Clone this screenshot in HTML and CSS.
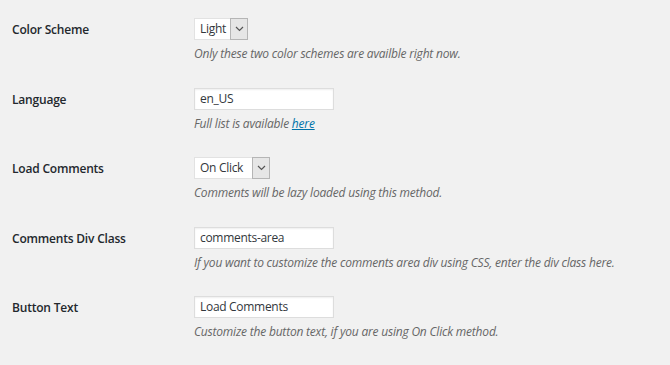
FILE: index.html
```html
<!DOCTYPE html>
<html>
<head>
<meta charset="utf-8">
<link rel="stylesheet" href="styles.css">
</head>
<body>
<div class="form">
  <div class="row">
    <div class="label">Color Scheme</div>
    <div class="field">
      <div class="select"><span class="select-value w-light">Light</span><span class="select-btn"><svg width="9" height="6" viewBox="0 0 9 6"><path d="M1 1 L4.5 4.5 L8 1" fill="none" stroke="#555" stroke-width="1.2"/></svg></span></div>
      <p class="desc">Only these two color schemes are availble right now.</p>
    </div>
  </div>
  <div class="row">
    <div class="label">Language</div>
    <div class="field">
      <div class="input">en_US</div>
      <p class="desc">Full list is available <a href="#">here</a></p>
    </div>
  </div>
  <div class="row">
    <div class="label">Load Comments</div>
    <div class="field">
      <div class="select"><span class="select-value w-click">On Click</span><span class="select-btn"><svg width="9" height="6" viewBox="0 0 9 6"><path d="M1 1 L4.5 4.5 L8 1" fill="none" stroke="#555" stroke-width="1.2"/></svg></span></div>
      <p class="desc">Comments will be lazy loaded using this method.</p>
    </div>
  </div>
  <div class="row">
    <div class="label">Comments Div Class</div>
    <div class="field">
      <div class="input">comments-area</div>
      <p class="desc">If you want to customize the comments area div using CSS, enter the div class here.</p>
    </div>
  </div>
  <div class="row">
    <div class="label">Button Text</div>
    <div class="field">
      <div class="input">Load Comments</div>
      <p class="desc">Customize the button text, if you are using On Click method.</p>
    </div>
  </div>
</div>
</body>
</html>
```

FILE: styles.css
```css
html, body {
  margin: 0;
  padding: 0;
  background: #f1f1f1;
}
body {
  font-family: "Open Sans", "Noto Sans", sans-serif;
  color: #23282d;
  font-size: 13px;
}
.form {
  padding: 4px 0 0 12px;
}
.row {
  display: grid;
  grid-template-columns: 182px 1fr;
  padding: 14px 0 10.5px;
}
.label {
  font-weight: 600;
  font-size: 12px;
  letter-spacing: -0.2px;
  line-height: 22px;
  padding-top: 1px;
  color: #23282d;
}
.field {
  display: flex;
  flex-direction: column;
  align-items: flex-start;
}
.input {
  box-sizing: border-box;
  width: 140px;
  height: 22px;
  background: #fff;
  border: 1px solid #ddd;
  box-shadow: inset 0 1px 2px rgba(0,0,0,0.07);
  padding: 0 5px;
  line-height: 20px;
  font-size: 12px;
  letter-spacing: -0.3px;
  color: #32373c;
}
.select {
  box-sizing: border-box;
  height: 22px;
  display: flex;
  background: #fff;
  border: 1px solid #e2e2e2;
  border-right: none;
}
.select-value {
  padding: 0 5px;
  line-height: 20px;
  font-size: 12px;
  letter-spacing: -0.3px;
  color: #32373c;
}
.w-light { width: 24px; }
.w-click { width: 46px; }
.select-btn {
  box-sizing: border-box;
  width: 18px;
  height: 22px;
  margin-top: -1px;
  margin-left: 1px;
  background: #e6e6e6;
  border: 1px solid #b5b5b5;
  display: flex;
  align-items: center;
  justify-content: center;
}
.desc {
  margin: 5px 0 0;
  line-height: 18px;
  font-size: 12px;
  letter-spacing: -0.2px;
  font-style: italic;
  color: #666;
}
.desc a {
  color: #0073aa;
  text-decoration: underline;
}
```
